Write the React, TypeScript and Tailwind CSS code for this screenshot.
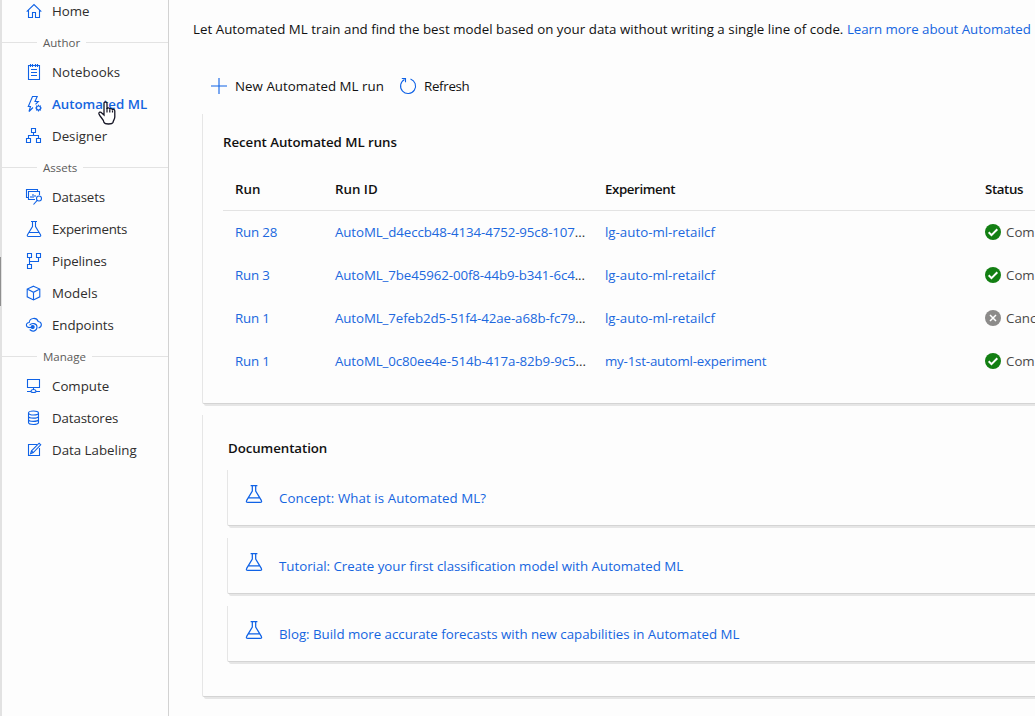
import type { ReactNode } from "react";

function Svg({ children, size = 16, className = "" }: { children: ReactNode; size?: number; className?: string }) {
  return (
    <svg
      width={size}
      height={size}
      viewBox="0 0 16 16"
      fill="none"
      stroke="#0f62e6"
      strokeWidth="1.1"
      className={`shrink-0 overflow-visible ${className}`}
    >
      {children}
    </svg>
  );
}

const flask = <path d="M5 .5h6M6.500 .5v5L1.500 13.700q-.8 1.800 1 1.800h11q1.800 0 1-1.800L9.500 5.500v-5M3.200 11.500h9.600" />;

const icons: Record<string, ReactNode> = {
  Home: <path d="M.7 8.700 8 1.500l7.300 7.200M2.500 7v7.500h4v-5h3v5h4V7" />,
  Notebooks: <path d="M2.500 1.500h11v14h-11zM4.500 0v3M6.500 0v3M9.500 0v3M11.500 0v3M5 5.500h6M5 8.500h6M5 11.500h6" />,
  "Automated ML": (
    <>
      <path d="M7 11.500 3 15.500l1.500-5H2.300L6.500 .5h4.700L9 5.500h3.300L9.500 8.300" />
      <circle cx="12.500" cy="12" r="2" />
      <path d="M12.500 8.700v1.400M12.500 13.900v1.500M9.200 12h1.400M14.400 12h1.400M10.200 9.700l1 1M13.800 13.300l1 1M10.200 14.300l1-1M13.800 10.700l1-1" />
    </>
  ),
  Designer: <path d="M5.500 .5h4v4h-4zM.5 10.500h4v4h-4zM10.500 10.500h4v4h-4zM7.500 4.500v3M2.500 10.500v-3h10v3" />,
  Datasets: (
    <>
      <path d="M9 10.500H2.500v-8h11V6M2.500 8.500h-2v-8h11v2M5 9V7M7 9V5M9 8V6" />
      <circle cx="13" cy="9.500" r="2.500" />
      <path d="m11.200 11.300-3.700 4.200" />
    </>
  ),
  Experiments: flask,
  Pipelines: <path d="M1.500 .5h4v4h-4zM10.500 .5h4v4h-4zM1.500 11.500h4v4h-4zM3.500 4.500v7M12.500 4.500v4h-9" />,
  Models: <path d="m7.500 1.200 6.300 2.900v7.700L7.500 15l-6.300-3.200V4.100zM1.200 4.100l6.300 3.200 6.300-3.200M7.500 7.300V15" />,
  Endpoints: (
    <>
      <path d="M3.500 10.500C-.7 10.500-.5 5.500 3.200 5.500c.5-5 7.500-5.500 9-1 4 .5 4.300 5.500.3 6.500" />
      <path d="M3.500 8.300C5.500 5.500 11 6 11 10s-4.500 5.500-7.300 2.500" />
      <circle cx="6.700" cy="10" r="1.500" fill="#0f62e6" />
      <path d="M2 10.500h5" />
    </>
  ),
  Compute: <path d="M1.500 1.500h12v8h-12zM7.500 9.500v2M1 13.500h4M10 13.500h4M5 13.500c0-2.700 5-2.700 5 0 0 1.300-5 1.300-5 0z" />,
  Datastores: (
    <>
      <ellipse cx="7.500" cy="3" rx="5" ry="2" />
      <path d="M2.500 3v9.500c0 2.600 10 2.600 10 0V3M2.500 6.200c0 2.600 10 2.600 10 0M2.500 9.400c0 2.600 10 2.600 10 0" />
    </>
  ),
  "Data Labeling": <path d="M11 2.500H2.500v11h11V6M4.500 11.800l1-3L13.100 1.200l1.600 1.600L7.300 10.600zM5.500 8.800l1.800 1.800" />,
};

const tracking: Record<string, string> = {
  Notebooks: "tracking-[0.06px]",
  Datasets: "tracking-[-0.13px]",
  Experiments: "tracking-[-0.23px]",
  Pipelines: "tracking-[-0.1px]",
  Models: "tracking-[0.05px]",
  Endpoints: "tracking-[-0.07px]",
  Datastores: "tracking-[-0.13px]",
};

function NavItem({ label, active = false }: { label: string; active?: boolean }) {
  return (
    <div className="flex h-8 shrink-0 items-center pl-[25px]">
      <Svg>{icons[label]}</Svg>
      <span
        className={`ml-[10px] whitespace-nowrap text-[13.3px] ${tracking[label] ?? ""} ${
          active ? "font-semibold text-[#1565e0]" : "text-[#2f2e2d]"
        }`}
      >
        {label}
      </span>
    </div>
  );
}

function NavHeading({ label }: { label: string }) {
  return (
    <div className="flex h-[29px] shrink-0 items-center pt-[2px]">
      <span className="h-px w-[36px] bg-[#e3e3e3]" />
      <span className="px-[6px] text-[11.500px] leading-4 text-[#5c5b5a]">{label}</span>
      <span className="h-px flex-1 bg-[#e3e3e3]" />
    </div>
  );
}

function StatusIcon({ ok }: { ok: boolean }) {
  return (
    <svg width="16" height="16" viewBox="0 0 16 16" fill="none" className="shrink-0">
      <circle cx="8" cy="8" r="8" fill={ok ? "#137f13" : "#8c8b8a"} />
      <path
        d={ok ? "m3.700 8.300 2.800 2.800 5.800-5.800" : "m5 5 6 6M11 5l-6 6"}
        stroke="#fff"
        strokeWidth={ok ? 2 : 1.5}
      />
    </svg>
  );
}

const runs = [
  { run: "Run 28", id: "AutoML_d4eccb48-4134-4752-95c8-107", exp: "lg-auto-ml-retailcf", ok: true },
  { run: "Run 3", id: "AutoML_7be45962-00f8-44b9-b341-6c4", exp: "lg-auto-ml-retailcf", ok: true },
  { run: "Run 1", id: "AutoML_7efeb2d5-51f4-42ae-a68b-fc79", exp: "lg-auto-ml-retailcf", ok: false },
  { run: "Run 1", id: "AutoML_0c80ee4e-514b-417a-82b9-9c5", exp: "my-1st-automl-experiment", ok: true },
];

const docs = [
  { title: "Concept: What is Automated ML?", spacing: "tracking-[0.08px]" },
  { title: "Tutorial: Create your first classification model with Automated ML", spacing: "tracking-[-0.02px]" },
  { title: "Blog: Build more accurate forecasts with new capabilities in Automated ML", spacing: "tracking-[-0.015px]" },
];

const card = "border-b border-l border-b-[#d4d4d4] border-l-[#e6e6e6] rounded-bl-[2px] shadow-[2px_2px_0_#e6e6e6]";
const columns = "grid grid-cols-[100px_270px_380px_200px] pl-3 whitespace-nowrap";

export default function App() {
  return (
    <div className="flex h-[716px] w-[1035px] overflow-hidden bg-[#fdfdfd] font-['Open_Sans',sans-serif] text-[13.3px] leading-5 text-[#111]">
      <aside className="relative flex w-[169px] shrink-0 flex-col border-r border-[#d2d2d2]">
        <div className="absolute inset-y-0 left-0 w-[2px] bg-[#e2e2e2]" />
        <div className="absolute left-0 top-[257px] h-[49px] w-px bg-[#8f8f8f]" />
        <nav className="-mt-[5px] ml-px flex flex-col">
          <NavItem label="Home" />
          <NavHeading label="Author" />
          <NavItem label="Notebooks" />
          <NavItem label="Automated ML" active />
          <NavItem label="Designer" />
          <NavHeading label="Assets" />
          <NavItem label="Datasets" />
          <NavItem label="Experiments" />
          <NavItem label="Pipelines" />
          <NavItem label="Models" />
          <NavItem label="Endpoints" />
          <NavHeading label="Manage" />
          <NavItem label="Compute" />
          <NavItem label="Datastores" />
          <NavItem label="Data Labeling" />
        </nav>
        <svg className="absolute left-[98px] top-[101px]" width="18" height="24" viewBox="0 0 18 24">
          <path
            d="M6 14V2.500C6 .5 9 .5 9 2.500V8c0-1.500 2.800-1.500 2.800.5 0-1.500 2.700-1.300 2.700.7 0-1.500 2.300-1 2.300.8v6c0 2.500-1.800 3.500-1.800 5.500-1 2-8 2-9 0C6 18.500 2 16 1 13c-.5-2 1.500-2.500 2.800-1z"
            fill="#fff"
            stroke="#151525"
            strokeWidth="1.300"
          />
          <path d="M9 7v4.500M11.800 8.500v3M14.500 9.500v2" stroke="#151525" strokeWidth="1.200" />
        </svg>
      </aside>

      <main className="flex min-w-0 flex-1 flex-col overflow-hidden">
        <p className="mt-[19px] h-5 whitespace-nowrap pl-6">
          <span className="tracking-[0.03px]">
            Let Automated ML train and find the best model based on your data without writing a single line of code.
          </span>{" "}
          <a className="tracking-[-0.03px] text-[#1565e0]">Learn more about Automated</a>
        </p>

        <div className="mt-[37px] flex h-5 items-center whitespace-nowrap pl-[42px]">
          <Svg>
            <path d="M8 0v16M0 8h16" />
          </Svg>
          <span className="ml-2 w-[149px] tracking-[0.04px]">New Automated ML run</span>
          <Svg className="ml-4">
            <path d="M10.500 .9A7.500 7.500 0 1 1 4.500 1.400M1.800 .5h3.700v3.700" />
          </Svg>
          <span className="ml-2 tracking-[-0.3px]">Refresh</span>
        </div>

        <section className={`ml-[33px] mt-[18px] h-[290px] shrink-0 pl-5 ${card}`}>
          <h2 className="pt-[18px] font-semibold tracking-[-0.06px]">Recent Automated ML runs</h2>
          <div className={`mt-[15px] h-[44px] items-center border-b border-[#e3e3e3] font-semibold ${columns}`}>
            <span>Run</span>
            <span>Run ID</span>
            <span className="tracking-[-0.4px]">Experiment</span>
            <span className="tracking-[-0.4px]">Status</span>
          </div>
          <div className="-mt-px">
            {runs.map((r) => (
              <div key={r.id} className={`h-[43px] items-center text-[#2068de] ${columns}`}>
                <a className="tracking-[-0.15px]">{r.run}</a>
                <a className="tracking-[-0.1px]">
                  {r.id}
                  <span className="text-[#333]">...</span>
                </a>
                <a className={r.exp.startsWith("my") ? "tracking-[-0.19px]" : ""}>{r.exp}</a>
                <span className="flex items-center gap-[5px] text-[#4a4948]">
                  <StatusIcon ok={r.ok} />
                  {r.ok ? "Completed" : "Canceled"}
                </span>
              </div>
            ))}
          </div>
        </section>

        <section className={`ml-[33px] mt-[11px] h-[282px] shrink-0 pl-6 ${card}`}>
          <h2 className="pl-px pt-[23px] font-semibold tracking-[-0.08px]">Documentation</h2>
          <div className="mt-3 flex flex-col gap-3">
            {docs.map((d) => (
              <div key={d.title} className={`flex h-14 items-center whitespace-nowrap pl-[17px] ${card}`}>
                <Svg size={18} className="-mt-2">
                  {flask}
                </Svg>
                <a className={`ml-4 text-[#1565e0] ${d.spacing}`}>{d.title}</a>
              </div>
            ))}
          </div>
        </section>
      </main>
    </div>
  );
}
